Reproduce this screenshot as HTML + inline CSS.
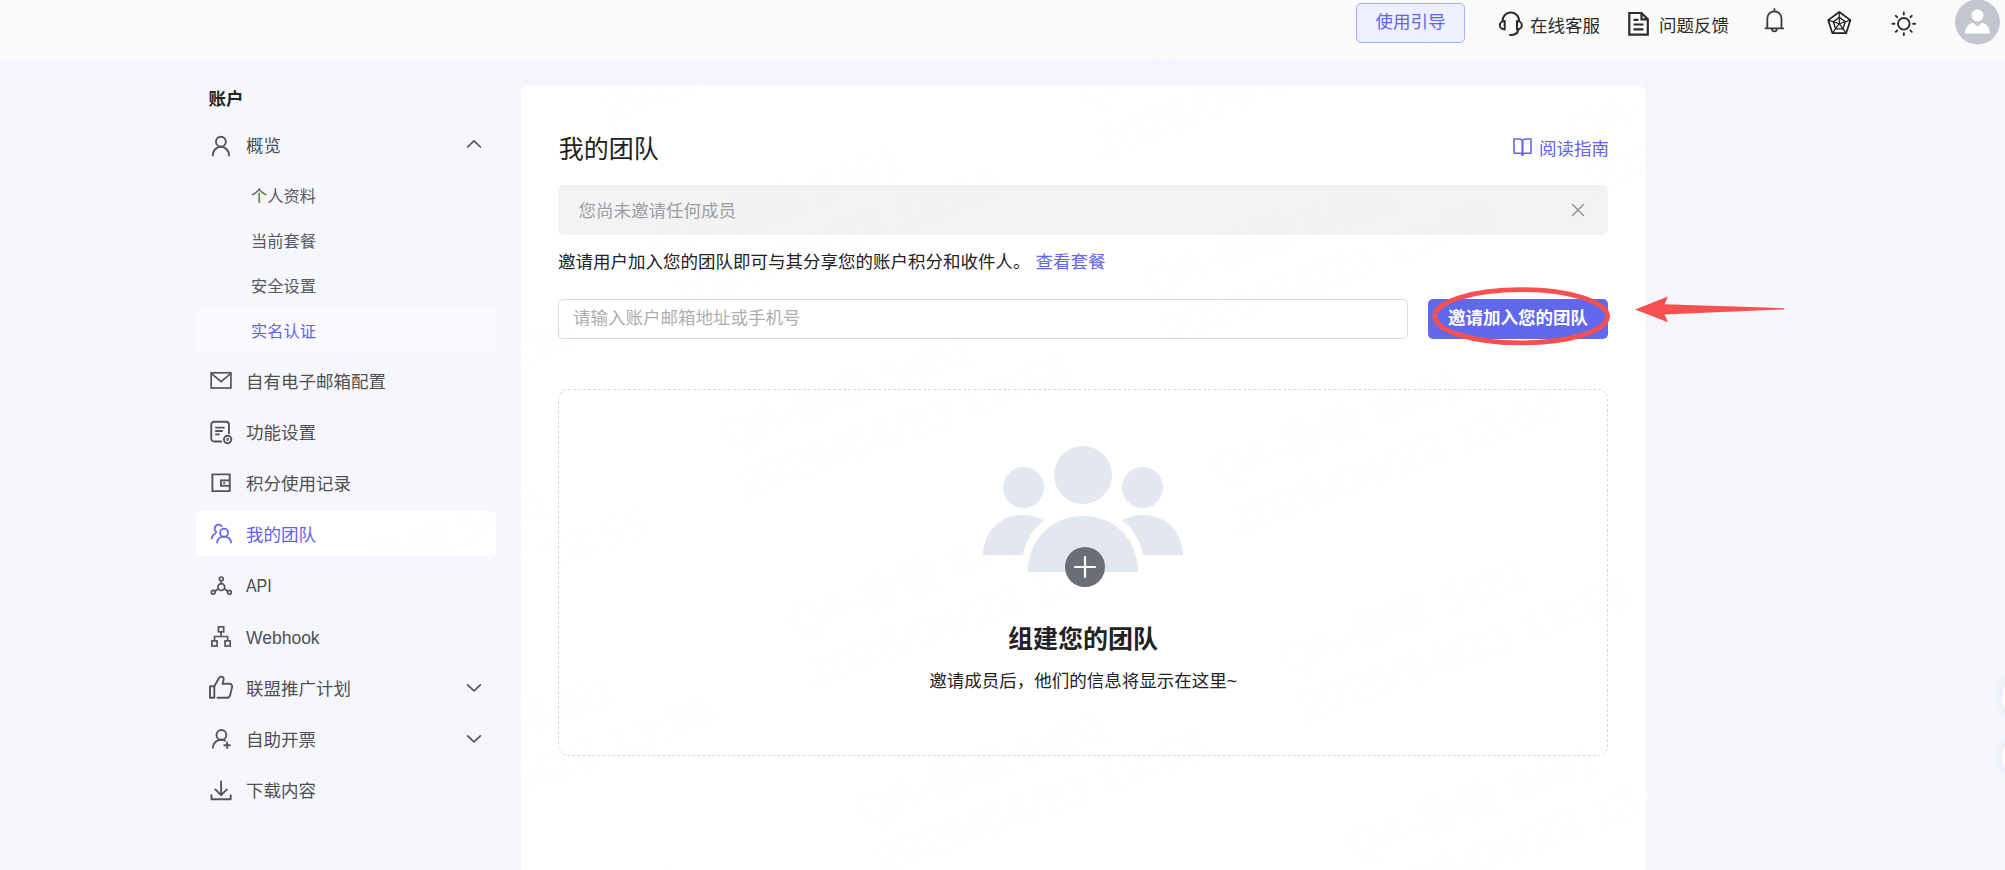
<!DOCTYPE html>
<html lang="zh-CN">
<head>
<meta charset="utf-8">
<title>我的团队</title>
<style>
*{box-sizing:border-box;margin:0;padding:0}
html,body{width:2005px;height:870px;overflow:hidden}
body{background:#f5f7fd;font-family:"Liberation Sans","Noto Sans CJK SC",sans-serif;color:#333;position:relative;font-size:17.5px}
.hdr{position:absolute;left:0;top:0;width:2005px;height:60px;background:#fafafa}
.abs{position:absolute}
.guide{left:1356px;top:3px;width:109px;height:40px;border:1px solid #a9acfa;background:#eeefff;border-radius:5px;color:#6063ee;font-size:17.5px;line-height:36px;text-align:center}
.htxt{top:13px;height:27px;line-height:27px;font-size:17.5px;color:#2b2b2b;white-space:nowrap}
.side-title{left:208.5px;top:86.7px;font-size:17.5px;font-weight:bold;color:#222;line-height:25px}
.mi{position:absolute;left:196px;width:300px;height:45px;border-radius:5px;color:#505050;font-size:17.5px;line-height:45px;white-space:nowrap}
.mi .t{position:absolute;left:50px;top:1.4px}
.lat{display:inline-block;transform-origin:left center;position:relative;top:.5px}
.mi svg{position:absolute;left:12px;top:10px}
.mi.act{background:#fff;color:#6063ee}
.sub{position:absolute;left:196px;width:300px;height:45px;border-radius:5px;color:#5a5a5a;font-size:16.25px;line-height:47.600px;padding-left:55px;white-space:nowrap}
.sub.act{background:#f9f9fe;color:#6063ee}
.card{left:521px;top:85px;width:1125px;height:800px;background:#fff;border-radius:10px}
.h1{left:558.700px;top:131.300px;font-size:25px;line-height:36px;color:#222}
.read{left:1539px;top:135.800px;font-size:17.5px;line-height:26px;color:#6063ee;white-space:nowrap}
.alert{left:558px;top:185px;width:1050px;height:50px;background:#f3f3f4;border-radius:5px;color:#9b9ea4;font-size:17.5px;line-height:52px;padding-left:20.500px}
.desc{left:558px;top:249px;font-size:17.5px;line-height:26px;color:#222;white-space:nowrap}
.desc a{color:#6063ee;margin-left:5px}
.inp{left:558px;top:299px;width:850px;height:40px;border:1px solid #d8dbe6;border-radius:5px;color:#aeaeae;font-size:17.5px;line-height:36px;padding-left:14px}
.btn{left:1428px;top:299px;width:180px;height:40px;background:#6268ee;border-radius:5px;color:#fff;font-weight:bold;font-size:17.5px;line-height:38px;text-align:center}
.fl{left:2002px;width:50px;height:50px;border-radius:25px;background:#fff;box-shadow:0 0 12px rgba(60,70,120,.10)}
.wm{position:absolute;transform-origin:0 0;transform:rotate(-19.850deg);font-size:42px;line-height:53px;white-space:nowrap;color:#a4a4a4;pointer-events:none}
.wmwrap{position:absolute;left:0;top:0;width:2005px;height:870px;overflow:hidden;opacity:.004;pointer-events:none;z-index:50}
.dash{left:558px;top:389px;width:1050px;height:367px;border:1px dashed #d6d8e2;border-radius:10px}
.et{left:558px;width:1050px;text-align:center;top:620.800px;font-size:25px;font-weight:bold;color:#222;line-height:36px}
.es{left:558px;width:1050px;text-align:center;top:667.600px;font-size:17.5px;color:#222;line-height:26px}
</style>
</head>
<body>
<div class="hdr"></div>
<div class="abs guide">使用引导</div>

<svg class="abs" style="left:1497px;top:10px" width="28" height="28" viewBox="0 0 28 28" fill="none" stroke="#2b2b2b" stroke-width="2" stroke-linecap="round" stroke-linejoin="round">
<path d="M5.600 11 C5.600 -0.300 22.100 -0.300 22.100 11"/>
<path d="M7.700 11.100 C1.300 11.100 1.300 19.400 7.700 19.400 Z"/>
<path d="M20 11.100 C26.400 11.100 26.400 19.400 20 19.400 Z"/>
<path d="M21.200 19.600 C21 23.500 18 25 13 25"/>
</svg>
<div class="abs htxt" style="left:1530px">在线客服</div>

<svg class="abs" style="left:1626px;top:10px" width="26" height="28" viewBox="0 0 26 28" fill="none" stroke="#2b2b2b" stroke-width="2.200" stroke-linejoin="miter">
<path d="M3.3 3 H15.5 L21.800 9.300 V24.600 H3.3 Z"/>
<path d="M15.5 3 V9.300 H21.800"/>
<path d="M7.500 9.800 H12.500 M7.500 14.500 H17.500 M7.500 19.400 H17.500"/>
</svg>
<div class="abs htxt" style="left:1659px">问题反馈</div>

<svg class="abs" style="left:1760px;top:6px" width="28" height="30" viewBox="0 0 28 30" fill="none" stroke="#3a3a40" stroke-width="1.800" stroke-linecap="round" stroke-linejoin="round">
<path d="M5.500 22.300 H23.300 M7.300 22.300 V12.500 a7.100 7.100 0 0 1 14.200 0 V22.300"/>
<path d="M14.400 5.400 V2.800"/>
<path d="M12 23 a2.400 2.400 0 0 0 4.800 0"/>
</svg>

<svg class="abs" style="left:1825px;top:9px" width="28" height="28" viewBox="0 0 28 28" fill="none" stroke="#1f1f1f" stroke-width="1.700" stroke-linejoin="round">
<path d="M14.30 3.00 L25.43 11.08 L21.18 24.17 L7.42 24.17 L3.17 11.08 Z" stroke-width="1.700"/>
<path d="M14.30 8.40 L20.29 12.75 L18.00 19.80 L10.60 19.80 L8.31 12.75 Z" stroke-width="1.300"/>
<path d="M14.30 14.70 L14.30 3.00 M14.30 14.70 L25.43 11.08 M14.30 14.70 L21.18 24.17 M14.30 14.70 L7.42 24.17 M14.30 14.70 L3.17 11.08" stroke-width="1.200"/>
</svg>

<svg class="abs" style="left:1889px;top:9px" width="30" height="30" viewBox="0 0 30 30" fill="none" stroke="#2b2b2b" stroke-width="1.900" stroke-linecap="round">
<circle cx="14.800" cy="14.800" r="5.800"/>
<path d="M14.800 3.500 V5.500 M14.800 24.100 V26.100 M3.500 14.800 H5.500 M24.100 14.800 H26.100 M6.800 6.800 L8.200 8.200 M21.400 21.400 L22.800 22.800 M6.800 22.800 L8.200 21.400 M21.400 8.200 L22.800 6.800"/>
</svg>

<svg class="abs" style="left:1955px;top:-1.500px" width="45" height="46" viewBox="0 0 45 46">
<circle cx="22.500" cy="23" r="22.500" fill="#c3c6cf"/>
<circle cx="22.500" cy="16.500" r="6" fill="#fff"/>
<path d="M10 34.500 c0 -6 3.500 -10 8 -10.800 L22.500 27.500 L27 23.700 c4.500 0.800 8 4.800 8 10.800 Z" fill="#fff"/>
</svg>

<div class="abs side-title">账户</div>

<!-- menu -->
<div class="mi" style="top:123px"><svg style="top:9.800px" width="26" height="26" viewBox="0 0 26 26" fill="none" stroke="#555" stroke-width="1.900" stroke-linecap="round"><circle cx="12.900" cy="8.700" r="4.900"/><path d="M4.800 22.600 c0 -5.200 3.600 -8.800 8.100 -8.800 s8.100 3.600 8.100 8.800"/></svg><span class="t" style="top:1px">概览</span>
<svg style="left:268.500px;top:14.300px" width="18" height="14" viewBox="0 0 18 14" fill="none" stroke="#555" stroke-width="1.700" stroke-linecap="round" stroke-linejoin="round"><path d="M2.600 10 L9 3.900 L15.400 10"/></svg></div>
<div class="sub" style="top:173px">个人资料</div>
<div class="sub" style="top:218px">当前套餐</div>
<div class="sub" style="top:263px">安全设置</div>
<div class="sub act" style="top:308px">实名认证</div>

<div class="mi" style="top:358px"><svg width="26" height="26" viewBox="0 0 26 26" fill="none" stroke="#555" stroke-width="1.700" stroke-linejoin="miter"><rect x="3.200" y="4.800" width="19.700" height="15.200"/><path d="M3.200 5.300 L13.050 13.600 L22.900 5.300"/></svg><span class="t" style="top:2.2px">自有电子邮箱配置</span></div>

<div class="mi" style="top:409px"><svg width="26" height="28" viewBox="0 0 26 28" fill="none" stroke="#555" stroke-width="1.900" stroke-linecap="round" stroke-linejoin="round"><path d="M13.300 22.500 H6.050 a2.800 2.800 0 0 1 -2.800 -2.800 V5.550 a2.800 2.800 0 0 1 2.800 -2.800 H18.150 a2.800 2.800 0 0 1 2.800 2.800 V14.300"/><path d="M7.900 8.600 H15.900 M7.900 12 H14.100 M7.900 15.400 H11"/><circle cx="19.600" cy="20.500" r="3.700"/><circle cx="19.600" cy="20.500" r="0.500"/></svg><span class="t" style="top:2.4px">功能设置</span></div>

<div class="mi" style="top:460px"><svg width="26" height="26" viewBox="0 0 26 26" fill="none" stroke="#555" stroke-width="1.900" stroke-linejoin="miter"><path d="M21.700 10.400 V4.400 H4.400 V21.100 H21.700 V15.800"/><rect x="13" y="10.400" width="8.700" height="5.400"/><path d="M15.200 13.100 H17.200"/></svg><span class="t" style="top:1.6px">积分使用记录</span></div>

<div class="mi act" style="top:511px"><svg width="26" height="26" viewBox="0 0 26 26" fill="none" stroke="#6063ee" stroke-width="1.700" stroke-linecap="round"><circle cx="16.050" cy="11.700" r="4"/><path d="M9.050 21.700 c0.400 -3.700 3 -6.100 7 -6.100 s6.600 2.400 7 6.100"/><path d="M13.800 5.200 A4 4 0 1 0 8.300 10.900 M7.600 12.200 C5.600 13.200 4.200 15 3.700 17.300"/></svg><span class="t" style="top:1.6px">我的团队</span></div>

<div class="mi" style="top:562px"><svg width="26" height="26" viewBox="0 0 26 26" fill="none" stroke="#555" stroke-width="1.700" stroke-linecap="round"><circle cx="13.300" cy="6.900" r="1.900"/><circle cx="5.200" cy="20.300" r="1.900"/><circle cx="21.400" cy="20.300" r="1.900"/><circle cx="13.300" cy="15" r="3.400"/><path d="M13.300 8.800 V11.600 M10.400 16.800 L6.900 19.300 M16.200 16.800 L19.700 19.300"/></svg><span class="t"><span class="lat" style="transform:scaleX(.91)">API</span></span></div>

<div class="mi" style="top:614px"><svg width="26" height="26" viewBox="0 0 26 26" fill="none" stroke="#555" stroke-width="1.700" stroke-linejoin="miter"><rect x="10.450" y="2.800" width="5.200" height="5"/><rect x="3.900" y="16.900" width="5.200" height="5.100"/><rect x="17" y="16.900" width="5.200" height="5.100"/><path d="M13.050 7.800 V12.500 M6.500 16.900 V12.500 H19.600 V16.900"/></svg><span class="t"><span class="lat">Webhook</span></span></div>

<div class="mi" style="top:665px"><svg width="28" height="28" viewBox="0 0 28 28" fill="none" stroke="#555" stroke-width="1.900" stroke-linejoin="round" stroke-linecap="round" style="left:11px;top:8px"><path d="M3 13.300 H7.300 V24.800 H3 Z"/><path d="M7.300 13.300 L12 5 c0.500 -1 1.300 -1.400 2.200 -1.400 c1.800 0 2.800 1.600 2.400 3.300 L15.500 10.800 H22.500 c1.800 0 3 1.600 2.600 3.300 L23 22.400 c-0.400 1.500 -1.600 2.400 -3.200 2.400 H10.500"/></svg><span class="t" style="top:1.6px">联盟推广计划</span>
<svg style="left:268.500px;top:16px" width="18" height="14" viewBox="0 0 18 14" fill="none" stroke="#555" stroke-width="1.700" stroke-linecap="round" stroke-linejoin="round"><path d="M2.600 3.800 L9 9.900 L15.400 3.800"/></svg></div>

<div class="mi" style="top:716px"><svg width="26" height="26" viewBox="0 0 26 26" fill="none" stroke="#555" stroke-width="1.900" stroke-linecap="round"><circle cx="13.400" cy="8.900" r="4.900"/><path d="M4.900 21.700 c0 -4.800 3.800 -7.900 8.300 -7.900 c1.400 0 2.700 0.300 3.800 0.900"/><path d="M19.100 16.500 V22.100 M16.300 19.300 H21.900" stroke-width="1.900"/></svg><span class="t" style="top:2.1px">自助开票</span>
<svg style="left:268.500px;top:16px" width="18" height="14" viewBox="0 0 18 14" fill="none" stroke="#555" stroke-width="1.700" stroke-linecap="round" stroke-linejoin="round"><path d="M2.600 3.800 L9 9.900 L15.400 3.800"/></svg></div>

<div class="mi" style="top:767px"><svg width="26" height="26" viewBox="0 0 26 26" fill="none" stroke="#555" stroke-width="1.900" stroke-linecap="round" stroke-linejoin="round"><path d="M13.100 4.500 V17.800 M7.300 12.400 L13.100 18.200 L18.900 12.400"/><path d="M3.500 18.200 V22.300 H22.700 V18.200"/></svg><span class="t" style="top:2.1px">下载内容</span></div>

<!-- main card -->
<div class="abs card"></div>
<div class="abs h1">我的团队</div>
<svg class="abs" style="left:1511px;top:136px" width="24" height="24" viewBox="0 0 24 24" fill="none" stroke="#6063ee" stroke-width="1.600" stroke-linejoin="round"><path d="M3 3 H8.900 a2.600 2.600 0 0 1 2.600 2.600 V19.500 a2.300 2.300 0 0 0 -2.300 -2.300 H3 Z"/><path d="M20 3 H14.100 a2.600 2.600 0 0 0 -2.600 2.600 V19.500 a2.300 2.300 0 0 1 2.300 -2.300 H20 Z"/></svg>
<div class="abs read">阅读指南</div>
<div class="abs alert">您尚未邀请任何成员</div>
<svg class="abs" style="left:1570px;top:202px" width="16" height="16" viewBox="0 0 16 16" fill="none" stroke="#8f9096" stroke-width="1.400" stroke-linecap="round"><path d="M2.500 2.500 L13.500 13.500 M13.500 2.500 L2.500 13.500"/></svg>
<div class="abs desc">邀请用户加入您的团队即可与其分享您的账户积分和收件人。<a>查看套餐</a></div>
<div class="abs inp">请输入账户邮箱地址或手机号</div>
<div class="abs btn">邀请加入您的团队</div>

<!-- annotation -->
<svg class="abs" style="left:1420px;top:280px" width="380" height="80" viewBox="0 0 380 80" fill="none">
<ellipse cx="101.200" cy="36.300" rx="86.400" ry="26.600" stroke="#f65050" stroke-width="4.800"/>
<path d="M215 29.400 L248 16.500 L244.500 24.200 L364 28.200 L364 29.400 L244.500 34.600 L248 42.300 Z" fill="#f65050"/>
</svg>

<div class="abs dash"></div>
<div class="abs fl" style="top:672px"></div><div class="abs fl" style="top:732px"></div>
<svg class="abs" style="left:983px;top:446px" width="202" height="146" viewBox="0 0 202 146">
<g fill="#e2e7f0">
<circle cx="40.500" cy="41.500" r="20.500"/>
<circle cx="159.500" cy="41.500" r="20.500"/>
<path d="M0 109 C1 85 17 69 40 69 c8 0 15 2 21 5.500 C50 83 42 95 40 109 Z"/>
<path d="M200 109 C199 85 183 69 160 69 c-8 0 -15 2 -21 5.500 C150 83 158 95 160 109 Z"/>
<circle cx="100" cy="29" r="29"/>
<path d="M45 126 C45 94 68 70 100 70 s55 24 55 56 Z"/>
</g>
<circle cx="102" cy="121" r="20" fill="#6b6e76"/>
<path d="M102 111 V131 M92 121 H112" stroke="#fff" stroke-width="2.200" stroke-linecap="round"/>
</svg>
<div class="abs et">组建您的团队</div>
<div class="abs es">邀请成员后，他们的信息将显示在这里~</div>
<!-- watermark -->
<div class="wmwrap">
<div class="wm" style="left:-405.0px;top:-35.7px">QA-鲁敏 5481<br><span style="letter-spacing:1.500px">2026/04/23 13:55</span></div>
<div class="wm" style="left:-337.1px;top:152.5px">QA-鲁敏 5481<br><span style="letter-spacing:1.500px">2026/04/23 13:55</span></div>
<div class="wm" style="left:-269.2px;top:340.6px">QA-鲁敏 5481<br><span style="letter-spacing:1.500px">2026/04/23 13:55</span></div>
<div class="wm" style="left:-201.3px;top:528.7px">QA-鲁敏 5481<br><span style="letter-spacing:1.500px">2026/04/23 13:55</span></div>
<div class="wm" style="left:-133.4px;top:716.8px">QA-鲁敏 5481<br><span style="letter-spacing:1.500px">2026/04/23 13:55</span></div>
<div class="wm" style="left:-65.5px;top:904.9px">QA-鲁敏 5481<br><span style="letter-spacing:1.500px">2026/04/23 13:55</span></div>
<div class="wm" style="left:86.1px;top:-0.3px">QA-鲁敏 5481<br><span style="letter-spacing:1.500px">2026/04/23 13:55</span></div>
<div class="wm" style="left:154.1px;top:187.8px">QA-鲁敏 5481<br><span style="letter-spacing:1.500px">2026/04/23 13:55</span></div>
<div class="wm" style="left:222.0px;top:375.9px">QA-鲁敏 5481<br><span style="letter-spacing:1.500px">2026/04/23 13:55</span></div>
<div class="wm" style="left:289.9px;top:564.0px">QA-鲁敏 5481<br><span style="letter-spacing:1.500px">2026/04/23 13:55</span></div>
<div class="wm" style="left:357.8px;top:752.1px">QA-鲁敏 5481<br><span style="letter-spacing:1.500px">2026/04/23 13:55</span></div>
<div class="wm" style="left:425.7px;top:940.2px">QA-鲁敏 5481<br><span style="letter-spacing:1.500px">2026/04/23 13:55</span></div>
<div class="wm" style="left:577.3px;top:35.0px">QA-鲁敏 5481<br><span style="letter-spacing:1.500px">2026/04/23 13:55</span></div>
<div class="wm" style="left:645.2px;top:223.1px">QA-鲁敏 5481<br><span style="letter-spacing:1.500px">2026/04/23 13:55</span></div>
<div class="wm" style="left:713.1px;top:411.2px">QA-鲁敏 5481<br><span style="letter-spacing:1.500px">2026/04/23 13:55</span></div>
<div class="wm" style="left:781.1px;top:599.3px">QA-鲁敏 5481<br><span style="letter-spacing:1.500px">2026/04/23 13:55</span></div>
<div class="wm" style="left:849.0px;top:787.4px">QA-鲁敏 5481<br><span style="letter-spacing:1.500px">2026/04/23 13:55</span></div>
<div class="wm" style="left:916.9px;top:975.6px">QA-鲁敏 5481<br><span style="letter-spacing:1.500px">2026/04/23 13:55</span></div>
<div class="wm" style="left:1068.5px;top:70.3px">QA-鲁敏 5481<br><span style="letter-spacing:1.500px">2026/04/23 13:55</span></div>
<div class="wm" style="left:1136.4px;top:258.4px">QA-鲁敏 5481<br><span style="letter-spacing:1.500px">2026/04/23 13:55</span></div>
<div class="wm" style="left:1204.3px;top:446.5px">QA-鲁敏 5481<br><span style="letter-spacing:1.500px">2026/04/23 13:55</span></div>
<div class="wm" style="left:1272.2px;top:634.6px">QA-鲁敏 5481<br><span style="letter-spacing:1.500px">2026/04/23 13:55</span></div>
<div class="wm" style="left:1340.1px;top:822.8px">QA-鲁敏 5481<br><span style="letter-spacing:1.500px">2026/04/23 13:55</span></div>
<div class="wm" style="left:1491.8px;top:-82.5px">QA-鲁敏 5481<br><span style="letter-spacing:1.500px">2026/04/23 13:55</span></div>
<div class="wm" style="left:1559.7px;top:105.6px">QA-鲁敏 5481<br><span style="letter-spacing:1.500px">2026/04/23 13:55</span></div>
<div class="wm" style="left:1627.6px;top:293.7px">QA-鲁敏 5481<br><span style="letter-spacing:1.500px">2026/04/23 13:55</span></div>
<div class="wm" style="left:1695.5px;top:481.8px">QA-鲁敏 5481<br><span style="letter-spacing:1.500px">2026/04/23 13:55</span></div>
<div class="wm" style="left:1763.4px;top:670.0px">QA-鲁敏 5481<br><span style="letter-spacing:1.500px">2026/04/23 13:55</span></div>
<div class="wm" style="left:1831.3px;top:858.1px">QA-鲁敏 5481<br><span style="letter-spacing:1.500px">2026/04/23 13:55</span></div>
<div class="wm" style="left:1982.9px;top:-47.2px">QA-鲁敏 5481<br><span style="letter-spacing:1.500px">2026/04/23 13:55</span></div>
</div>
</body>
</html>
